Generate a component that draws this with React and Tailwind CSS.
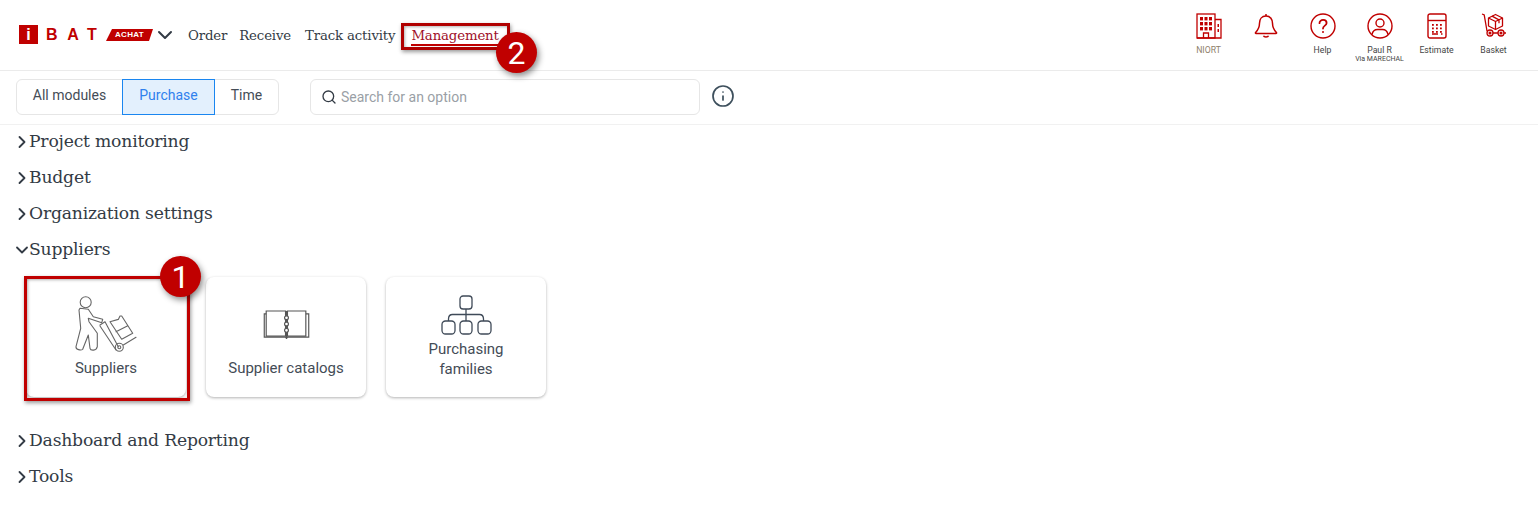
import React from "react";
import { ChevronDown, ChevronRight, Search, Info } from "lucide-react";

const slab = "font-['DejaVu_Serif',serif]";
const R = "#c00000";

function Building() {
  return (
    <svg width="26" height="26" viewBox="0 0 26 26" fill="none" stroke={R} strokeWidth="1.3">
      <rect x="1" y="1" width="18" height="24" />
      <path d="M19 6.500h6V25H1" />
      <g fill={R} stroke="none">
        {[4, 8.5, 13].map((x) =>
          [4, 9, 14].map((y) => <rect key={x + "-" + y} x={x} y={y} width="3" height="3.400" />)
        )}
        <rect x="21.500" y="11" width="1.500" height="3" />
        <rect x="21.500" y="16" width="1.500" height="3" />
      </g>
      <path d="M7.500 25v-5h5v5" />
    </svg>
  );
}
function Bell() {
  return (
    <svg width="24" height="26" viewBox="0 0 24 26" fill="none" stroke={R} strokeWidth="1.5" strokeLinejoin="round">
      <path d="M12 3c-4.400 0-6.500 3.400-6.500 7.200 0 4.600-1.400 6.600-3.900 9.300-.4.500-.1.900.4.900h20c.5 0 .8-.4.4-.9-2.500-2.700-3.900-4.700-3.900-9.300C18.500 6.400 16.400 3 12 3z" />
      <path d="M12 1v2M9.500 22.800c.5 1.500 4.500 1.500 5 0" />
    </svg>
  );
}
function Help() {
  return (
    <svg width="26" height="26" viewBox="0 0 26 26" fill="none" stroke={R} strokeWidth="1.4" strokeLinecap="round">
      <circle cx="13" cy="13" r="12" />
      <path d="M9.500 10.200c0-2 1.600-3.300 3.600-3.300s3.500 1.300 3.500 3.100c0 2.600-3.600 2.700-3.600 5.500" strokeWidth="1.800" />
      <circle cx="13" cy="19" r="1" fill={R} stroke="none" />
    </svg>
  );
}
function User() {
  return (
    <svg width="26" height="26" viewBox="0 0 26 26" fill="none" stroke={R} strokeWidth="1.4">
      <circle cx="13" cy="13" r="12" />
      <circle cx="13" cy="10" r="4" />
      <path d="M5 21.500c.8-3.600 3.400-5 5.500-5h5c2.100 0 4.700 1.400 5.500 5" />
    </svg>
  );
}
function Calc() {
  return (
    <svg width="20" height="26" viewBox="0 0 20 26" fill="none" stroke={R} strokeWidth="1.4">
      <rect x="1" y="1" width="18" height="24" rx="2" />
      <path d="M1 7.500h18" />
      <g fill={R} stroke="none">
        {[5, 9, 13].map((x) =>
          [11, 14.5, 18].map((y) => <rect key={x + "-" + y} x={x} y={y} width="1.800" height="1.800" />)
        )}
      </g>
      <path d="M5 21h6M14 21h1.500" />
    </svg>
  );
}
function Basket() {
  return (
    <svg width="26" height="26" viewBox="0 0 26 26" fill="none" stroke={R} strokeWidth="1.3" strokeLinejoin="round">
      <path d="M1 1l2.200.8L6 18" />
      <path d="M7.500 5l7-3.500 7 3.500v8l-7 3.500-7-3.500z" />
      <path d="M7.500 5l7 3.500 7-3.500M14.500 8.500v8M11 3.200l7 3.600v3.500" />
      <path d="M6 20h19" strokeWidth="1.500" />
      <circle cx="9" cy="20" r="3" fill="#fff" />
      <circle cx="20" cy="20" r="3" fill="#fff" />
      <circle cx="9" cy="20" r=".9" fill={R} />
      <circle cx="20" cy="20" r=".9" fill={R} />
    </svg>
  );
}

function HeaderAction({ icon, label, sub, labelClass = "text-[#444]" }) {
  return (
    <div className="w-[57px] h-[70px] flex flex-col items-center pt-[13px] relative">
      <div className="h-[26px] flex items-center justify-center">{icon}</div>
      <div className={"text-[8.7px] leading-[10px] mt-[6px] whitespace-nowrap font-['Roboto',sans-serif] " + labelClass}>{label}</div>
      {sub && <div className="text-[7px] leading-[8px] whitespace-nowrap text-[#444] font-['Roboto',sans-serif]">{sub}</div>}
    </div>
  );
}

function Section({ title, open }) {
  return (
    <div className="h-9 flex items-center pl-[12px]">
      {open ? (
        <ChevronDown size={20} strokeWidth={2.2} className="text-[#333b45] -mr-[3px]" />
      ) : (
        <ChevronRight size={20} strokeWidth={2.2} className="text-[#333b45] -mr-[3px]" />
      )}
      <span className={slab + " text-[17.2px] tracking-[-0.2px] text-[#333b45]"}>{title}</span>
    </div>
  );
}

function Card({ label, children }) {
  return (
    <div className="w-40 h-[120px] rounded-lg bg-white shadow-[0_1px_3px_rgba(0,0,0,0.3)] flex flex-col items-center text-[15px] leading-5 text-[#444c56] font-['Roboto',sans-serif] text-center">
      {children}
      <div>{label}</div>
    </div>
  );
}

function Badge({ n, className }) {
  return (
    <div className={"absolute w-[41px] h-[41px] rounded-full bg-[#c00000] text-white flex items-center justify-center text-[32px] font-['Roboto',sans-serif] shadow-[2px_3px_6px_rgba(0,0,0,0.45)] " + className}>
      {n}
    </div>
  );
}

export default function App() {
  return (
    <div className="relative w-[1538px] h-[512px] bg-white overflow-hidden">
      <header className="h-[71px] border-b border-[#ebebeb] flex items-center pl-[19px] pr-[16px]">
        <div className="flex items-center h-6 mt-[-1px]">
          <div className="w-[19px] h-[19px] bg-[#c00000] text-white flex items-center justify-center text-[16px] font-black font-['Liberation_Sans',sans-serif]">i</div>
          <span className="ml-[8px] text-[#c00000] text-[16px] font-black font-['Liberation_Sans',sans-serif] tracking-[9.600px] w-[60px]">BAT</span>
          <div className="relative w-[47px] h-[12px] flex items-center justify-center">
            <svg width="47" height="12" viewBox="0 0 47 12" className="absolute inset-0">
              <polygon points="6,0 47,0 43,12 0,12" fill="#c00000" />
            </svg>
            <span className="relative text-white text-[8px] font-bold tracking-[0.3px] font-['Liberation_Sans',sans-serif]">ACHAT</span>
          </div>
          <ChevronDown size={24} strokeWidth={2} className="text-[#333b45]" />
        </div>
        <nav className={slab + " flex items-center ml-[11px] mt-[1px] text-[13.3px] leading-4 tracking-[-0.15px] text-[#333b45]"}>
          <span>Order</span>
          <span className="ml-[12px]">Receive</span>
          <span className="ml-[14px]">Track activity</span>
          <span className="ml-[16px] text-[#a0102a] border-b-2 border-[#c00000] mt-[2px]">Management</span>
        </nav>
        <div className="ml-auto flex items-center">
          <HeaderAction icon={<Building />} label="NIORT" labelClass="text-[#8f7f6a]" />
          <HeaderAction icon={<Bell />} label="" />
          <HeaderAction icon={<Help />} label="Help" />
          <HeaderAction icon={<User />} label="Paul R" sub="Via MARECHAL" />
          <HeaderAction icon={<Calc />} label="Estimate" />
          <HeaderAction icon={<Basket />} label="Basket" />
        </div>
      </header>

      <div className="h-[54px] border-b border-[#f1f1f1] flex items-center pl-4 font-['Roboto',sans-serif] text-[14px]">
        <div className="flex h-9 mt-[-2px] rounded-md border border-[#e6e6e6]">
          <div className="w-[105px] flex items-center justify-center text-[#444c56] pb-[2px]">All modules</div>
          <div className="w-[93px] my-[-1px] flex items-center justify-center text-[#2f80ed] bg-[#e3f0fd] border border-[#1a86f0] pb-[2px]">Purchase</div>
          <div className="w-[63px] flex items-center justify-center text-[#444c56] pb-[2px]">Time</div>
        </div>
        <div className="ml-[31px] w-[390px] h-9 mt-[-2px] rounded-md border border-[#e6e6e6] flex items-center pl-[10px] pt-[1px]">
          <Search size={16} strokeWidth={2} className="text-[#333b45]" />
          <span className="ml-[4px] text-[#9a9fa6]">Search for an option</span>
        </div>
        <Info size={24} strokeWidth={1.7} className="ml-[11px] mt-[-4px] text-[#3d4f5c]" />
      </div>

      <main className="-mt-px">
        <Section title="Project monitoring" />
        <Section title="Budget" />
        <Section title="Organization settings" />
        <Section title="Suppliers" open />
        <div className="flex gap-5 pl-[26px] pt-[9px] pb-[26px]">
          <Card label="Suppliers">
            <svg width="66" height="60" viewBox="-2 0 66 60" fill="none" stroke="#666" strokeWidth="1.1" strokeLinejoin="round" strokeLinecap="round" className="mt-[18px] mb-[3px]">
              <circle cx="10.700" cy="7.300" r="5.500" />
              <path d="M5 13.300L4 15l1.700 18.300L1 51.700c-.3 3 5 4 6.700 2.600L13.300 40 15 53.300c.5 2.500 6.500 2.800 7.300-1.600V38.300L14 26.700l-.7-3.400 13.400 4.400 1-3.400-9.400-2.600-5-7.400z" />
              <path d="M25 30l5-3.300L43.300 51.700M25 31l16 24M48.300 50L61 42.300" />
              <circle cx="44.300" cy="52.300" r="4" />
              <circle cx="44.300" cy="52.300" r="1.500" />
              <path d="M35 26.700l8.300-2.300 1.700-3.400 1.700 0L57.700 38.300l-11 6zM41 36.700L52.300 31" />
            </svg>
          </Card>
          <Card label="Supplier catalogs">
            <svg width="47" height="29" viewBox="0 0 48 30" fill="none" stroke="#555" strokeWidth="1.2" className="mt-[33px] mb-[19px]">
              <path d="M3 1h20v26H3zM25 1h19v26H25z" />
              <path d="M3 4H1v24h22l1 1.500 1-1.500h22V4h-3M24 1v28" />
              <circle cx="24" cy="8" r="2" fill="#fff" />
              <circle cx="24" cy="14.500" r="2" fill="#fff" />
              <circle cx="24" cy="21" r="2" fill="#fff" />
            </svg>
          </Card>
          <Card label={<>Purchasing<br />families</>}>
            <svg width="52" height="40" viewBox="0 0 52 40" fill="none" stroke="#3f4a58" strokeWidth="1.3" className="mt-[18px] mb-[4px]">
              <rect x="20" y="1" width="12" height="13" rx="3" />
              <rect x="2" y="26" width="13" height="13" rx="3.500" />
              <rect x="20" y="26" width="12" height="13" rx="3.500" />
              <rect x="38" y="26" width="13" height="13" rx="3.500" />
              <path d="M26 14v12M8.500 26v-2c0-3 2-4.500 4-4.500h27c2 0 4 1.500 4 4.500v2" />
            </svg>
          </Card>
        </div>
        <Section title="Dashboard and Reporting" />
        <Section title="Tools" />
      </main>

      <div className="absolute left-[401px] top-[23px] w-[109px] h-[27px] border-[3px] border-[#b00000] shadow-[1px_2px_4px_rgba(0,0,0,0.4),inset_1px_1px_3px_rgba(0,0,0,0.3)]" />
      <Badge n="2" className="left-[496px] top-[32px]" />
      <div className="absolute left-[24px] top-[276px] w-[166px] h-[125px] border-[3px] border-[#c00000] shadow-[1px_2px_4px_rgba(0,0,0,0.4),inset_1px_1px_3px_rgba(0,0,0,0.3)]" />
      <Badge n="1" className="left-[160px] top-[256px]" />
    </div>
  );
}
